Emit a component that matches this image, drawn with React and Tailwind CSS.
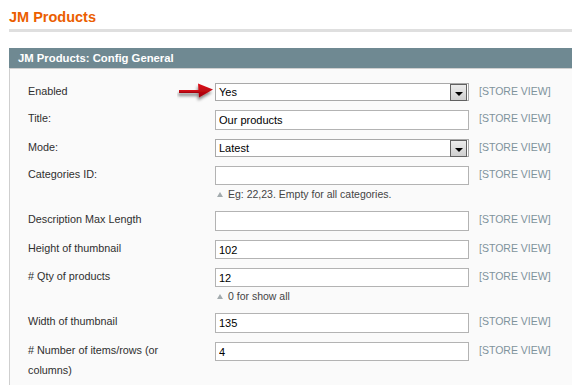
import React from "react";

const fields = [
  { label: "Enabled", type: "select", value: "Yes", arrow: true },
  { label: "Title:", value: "Our products", h: "h-[20px]" },
  { label: "Mode:", type: "select", value: "Latest" },
  { label: "Categories ID:", value: "", h: "h-[19px]", note: "Eg: 22,23. Empty for all categories." },
  { label: "Description Max Length", value: "", h: "h-[20px]" },
  { label: "Height of thumbnail", value: "102", h: "h-[19px]" },
  { label: "# Qty of products", value: "12", h: "h-[19px]", note: "0 for show all" },
  { label: "Width of thumbnail", value: "135", h: "h-[20px]" },
  { label: "# Number of items/rows (or columns)", value: "4", h: "h-[19px]" },
];

const RedArrow = () => (
  <svg className="absolute left-[-38px] top-[-1px]" width="40" height="22" viewBox="0 0 40 22">
    <defs>
      <linearGradient id="redg" x1="0" y1="0" x2="0" y2="1">
        <stop offset="0" stopColor="#e0101a" />
        <stop offset="1" stopColor="#a0000a" />
      </linearGradient>
      <filter id="shd" x="-30%" y="-30%" width="160%" height="180%">
        <feDropShadow dx="-1" dy="3" stdDeviation="1.5" floodColor="#000" floodOpacity="0.45" />
      </filter>
    </defs>
    <g filter="url(#shd)">
      <rect x="2" y="8" width="21" height="3" fill="url(#redg)" />
      <polygon points="21,1.5 36,7.5 22,15.5" fill="url(#redg)" />
    </g>
  </svg>
);

const Note = ({ text }) => (
  <div className="mt-[2px] flex items-center leading-[15px] text-[10.5px] text-[#444]">
    <svg className="ml-[2px] mr-[5px]" width="6" height="5" viewBox="0 0 6 5">
      <polygon points="3,0 6,5 0,5" fill="#a3abae" />
    </svg>
    {text}
  </div>
);

const Field = ({ f }) => (
  <div className="flex items-start pb-[9px]">
    <div className="w-[187px] pr-[20px] -mt-[2px] leading-[20px] text-[10.8px] text-[#2f2f2f]">{f.label}</div>
    <div className="relative w-[254px]">
      {f.arrow && <RedArrow />}
      {f.type === "select" ? (
        <div className="flex h-[18px] items-center border border-[#a9a9a9] bg-white pl-[3px] pr-px text-[11px] text-black">
          <span className="flex-1">{f.value}</span>
          <span className="flex h-[17px] w-[17px] items-center justify-center border border-[#616161] bg-gradient-to-b from-[#ececec] to-[#cfcfcf]">
            <svg className="mt-[3px]" width="8" height="4" viewBox="0 0 8 4">
              <polygon points="0,0 8,0 4,4" fill="#000" />
            </svg>
          </span>
        </div>
      ) : (
        <input
          readOnly
          value={f.value}
          className={`${f.h} block w-full border border-[#b3b3b3] bg-white px-[3px] text-[11px] text-black outline-none`}
        />
      )}
      {f.note && <Note text={f.note} />}
    </div>
    <div className="ml-[10px] -mt-[2px] leading-[20px] text-[10.5px] text-[#7e939c]">[STORE VIEW]</div>
  </div>
);

export default function App() {
  return (
    <div className="h-[385px] w-full overflow-hidden bg-white font-['Liberation_Sans',Arial,sans-serif]">
      <div className="pl-[9px]">
        <h3 className="pt-[8px] text-[14.5px] font-bold leading-[18px] text-[#eb5e00]">JM Products</h3>
        <div className="mt-[3px] h-[3px] bg-[#dfdfdf]" />
        <div className="mt-[16px] flex h-[20px] items-center bg-[#6f8992] pl-[9px] text-[11.3px] font-bold text-white">
          JM Products: Config General
        </div>
        <div className="h-[400px] border-l border-t border-[#cfcfcf] bg-[#fafafa] pl-[18px] pt-[14px]">
          {fields.map((f) => (
            <Field key={f.label} f={f} />
          ))}
        </div>
      </div>
    </div>
  );
}
